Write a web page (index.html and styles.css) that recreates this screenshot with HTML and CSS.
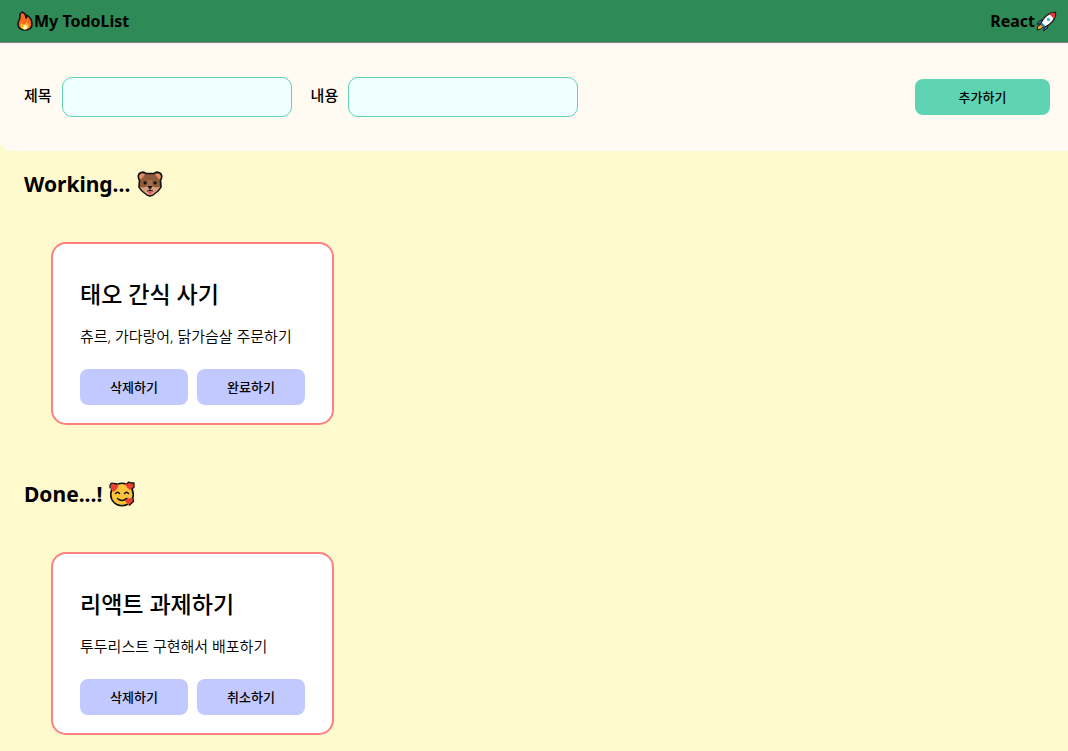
FILE: index.html
```
<!DOCTYPE html>
<html lang="ko">
<head>
    <meta charset="UTF-8">
    <meta name="viewport" content="width=device-width, initial-scale=1.0">
    <title>My TodoList</title>
    <link rel="stylesheet" href="styles.css">
</head>
<body>
    <header class="header">
        <div class="brand">
            <svg class="icon-fire" viewBox="0 0 16 20" aria-hidden="true">
                <path d="M5 1C8 2 9 4 9 7c1 0 1-1 1-3 3 2 5 5 5 9 0 4-3 6-7 6s-7-2-7-6c0-3 2-4 2-7 0-2-1-3 2-5z" fill="#f7691c" stroke="#111" stroke-width="1.500" stroke-linejoin="round"/>
                <path d="M10 11c0 1 2 2 2 4s-2 3.500-4 3.500S3.500 17 3.500 14.500c0-1 .5-2 1-2.500l1.500 1.500C8 13.500 9 12.500 10 11z" fill="#fcb92b"/>
                <path d="M8 13.500c1.500 1.500 2 2 2 3s-1 2-2 2-2.500-1-2-2.500c1-.5 1.500-1.500 2-2.500z" fill="#fff9c4"/>
            </svg>
            <span>My TodoList</span>
        </div>
        <div class="brand">
            <span>React</span>
            <svg class="icon-rocket" viewBox="0 0 22 22" aria-hidden="true">
                <path d="M5 14l-3 2-1 4 4-1 3-3z" fill="#f7a13a" stroke="#111" stroke-width="1"/>
                <path d="M8 9L4 10l-3 4 5-1zM13 14l-1 4-4 3 1-6z" fill="#2f7fc0" stroke="#111" stroke-width="1" stroke-linejoin="round"/>
                <path d="M20.500 1.500C14 1 8 6 5 13l4 4c7-3 12-9 11.500-15.500z" fill="#fff" stroke="#111" stroke-width="1.300" stroke-linejoin="round"/>
                <path d="M20 2c-2-.2-4 .2-6 1.200L18.800 8C19.800 6 20.200 4 20 2z" fill="#e8333f"/>
                <circle cx="13" cy="9" r="1.800" fill="#4db3e6"/>
                <path d="M5.500 13l3.500 3.500" stroke="#2f7fc0" stroke-width="2"/>
            </svg>
        </div>
    </header>

    <form class="add-form">
        <label for="title">제목</label>
        <input type="text" id="title" name="title">
        <label for="content">내용</label>
        <input type="text" id="content" name="content">
        <button type="button" class="add-btn">추가하기</button>
    </form>

    <main class="list-container">
        <section class="list">
            <h2 class="list-title">
                <span>Working...</span>
                <svg class="icon-face" viewBox="0 0 26 26" aria-hidden="true">
                    <path d="M4 1.500c2-.8 4 0 5 1h8c1-1 3-1.800 5-1 3 1 3.500 4.500 1.500 7.500l.5 7-3 4-5 4-3 1-3-1-5-4-3-4 .5-7C.5 6 1 2.500 4 1.500z" fill="#8d5a3c" stroke="#111" stroke-width="1.600" stroke-linejoin="round"/>
                    <path d="M2.500 7.500C1.500 4 4 1.500 8 3.500L4 8.500zM23.500 7.500c1-3.500-1.500-6-5.500-4L22 8.500z" fill="#e98a60"/>
                    <path d="M2.800 16l4 .5 4-1.500h4.400l4 1.500 4-.5-2.700 3.500-4.500 3.800-3 1-3-1-4.500-3.800z" fill="#d99c7c"/>
                    <path d="M11 9h4l1 7h-6z" fill="#a86d4a"/>
                    <circle cx="8" cy="11.800" r="1.600" fill="#111"/>
                    <circle cx="18" cy="11.800" r="1.600" fill="#111"/>
                    <path d="M10.500 15h5L14 17.500h-2z" fill="#111"/>
                    <path d="M13 17v3M10 20q3-1 6 0" fill="none" stroke="#111" stroke-width="1"/>
                    <path d="M11.500 20.300h3V22q-1.500 2-3 0z" fill="#ed4664"/>
                </svg>
            </h2>
            <div class="card">
                <h3>태오 간식 사기</h3>
                <p>츄르, 가다랑어, 닭가슴살 주문하기</p>
                <div class="card-btns">
                    <button type="button">삭제하기</button>
                    <button type="button">완료하기</button>
                </div>
            </div>
        </section>

        <section class="list">
            <h2 class="list-title">
                <span>Done...!</span>
                <svg class="icon-face" viewBox="0 0 26 26" aria-hidden="true">
                    <circle cx="13" cy="13.500" r="11.300" fill="#fcc33c" stroke="#111" stroke-width="1.600"/>
                    <path d="M1.500 3.500c1-2 3-1.500 3.500 0 1.500-1.500 4-1 4.200 1C9.500 7 7 9 4.500 11 2.500 8.500.5 6 1.500 3.500z" fill="#eb4030"/>
                    <path d="M17 2.500c1-2 3-1.500 4 0 1.500-1 4-.5 4 1.500 0 2-2 3.500-4 5-2.500-2-5-4-4-6.500z" fill="#eb4030"/>
                    <path d="M16.500 18c1-2 3-1.500 3.500 0 1.500-2 4-1.500 4.500.5.5 2-2 4.500-4.500 6-2-2-4.500-4-3.500-6.500z" fill="#eb4030"/>
                    <path d="M1.500 7.500C0 4 2 1 5 2.500L8 3M18 3l2-2 2 1h3v4l-2 2M20 24.500l4.500-4-.5-3" fill="none" stroke="#111" stroke-width="1.300" stroke-linejoin="round"/>
                    <path d="M6.500 12.500q2-2.500 4 0M15.500 12.500q2-2.500 4 0M8.500 17.500q4.500 4 9 0" fill="none" stroke="#111" stroke-width="1.500" stroke-linecap="round"/>
                </svg>
            </h2>
            <div class="card">
                <h3>리액트 과제하기</h3>
                <p>투두리스트 구현해서 배포하기</p>
                <div class="card-btns">
                    <button type="button">삭제하기</button>
                    <button type="button">취소하기</button>
                </div>
            </div>
        </section>
    </main>
</body>
</html>
```

FILE: styles.css
```
* {
    box-sizing: border-box;
}
body {
    margin: 0;
    min-height: 100vh;
    background: lemonchiffon;
    color: #000;
    font-family: "Noto Sans", "Noto Sans CJK KR", sans-serif;
}
.header {
    display: flex;
    justify-content: space-between;
    align-items: center;
    height: 43px;
    padding: 0 11px 0 17px;
    background: seagreen;
    border-bottom: 1px solid gray;
    font-size: 16px;
    font-weight: 700;
}
.brand {
    display: flex;
    align-items: center;
    gap: 1px;
}
.icon-fire {
    width: 16px;
    height: 20px;
}
.icon-rocket {
    width: 21px;
    height: 21px;
}
.add-form {
    display: flex;
    align-items: center;
    height: 108px;
    padding: 0 18px 0 24px;
    background: #fffaf2;
    border-bottom-left-radius: 10px;
}
.add-form label {
    margin-right: 10px;
    padding-bottom: 5px;
    font-size: 15px;
    font-weight: 500;
}
.add-form input {
    width: 230px;
    height: 40px;
    margin-right: 19px;
    padding: 0 12px;
    background: azure;
    border: 1px solid #5fd3b3;
    border-radius: 10px;
}
button {
    height: 36px;
    padding: 0 6px 2px;
    border: none;
    border-radius: 8px;
    color: #000;
    font-family: inherit;
    font-size: 13px;
    font-weight: 500;
    cursor: pointer;
}
.add-btn {
    width: 135px;
    margin-left: auto;
    background: #5fd4b3;
}
.list-container {
    padding: 16px 24px 0;
}
.list-title {
    display: flex;
    align-items: center;
    gap: 7px;
    height: 34px;
    margin: 0;
    font-size: 21px;
    font-weight: 700;
}
.icon-face {
    width: 26px;
    height: 26px;
}
.card {
    width: 283px;
    margin: 41px 27px 52px;
    padding: 32px 27px 18px;
    background: white;
    border: 2px solid #ff8080;
    border-radius: 15px;
}
.card h3 {
    margin: 0 0 12px;
    font-size: 23px;
    font-weight: 500;
    line-height: 36px;
}
.card p {
    margin: 0 0 21px;
    font-size: 15px;
    font-weight: 350;
    line-height: 24px;
}
.card-btns {
    display: flex;
    gap: 9px;
}
.card-btns button {
    flex: 1;
    background: #c2c9ff;
}
```
